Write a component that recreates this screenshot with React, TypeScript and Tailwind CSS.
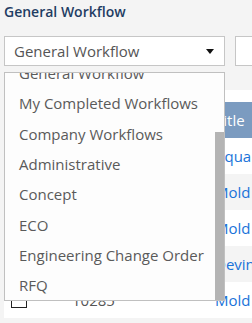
import React from "react";

const items = [
  "General Workflow",
  "My Completed Workflows",
  "Company Workflows",
  "Administrative",
  "Concept",
  "ECO",
  "Engineering Change Order",
  "RFQ",
];

const rows = [
  { id: "10281", title: "Aqua Filter Housing" },
  { id: "10282", title: "Mold Design Review" },
  { id: "10283", title: "Mold Tooling Update" },
  { id: "10284", title: "Devin Bracket" },
  { id: "10285", title: "Mold Release" },
];

export default function App() {
  return (
    <div
      className="w-[252px] h-[323px] overflow-hidden bg-[#f4f4f4] pl-[4px]"
      style={{ fontFamily: '"Open Sans", "Liberation Sans", sans-serif' }}
    >
      <div className="h-[36px] pt-[2px] text-[14px] leading-[20px] font-semibold text-[#1f3d63] whitespace-nowrap">
        General Workflow
      </div>
      <div className="flex gap-[10px] w-[300px]">
        <div className="relative w-[221px] shrink-0">
          <div className="h-[30px] border border-[#c6c6c6] bg-white flex items-center pl-[9px] pr-[10px] text-[15px] text-[#555555]">
            <span className="flex-1 whitespace-nowrap">General Workflow</span>
            <svg width="8" height="5" viewBox="0 0 8 5" className="mt-[1px]">
              <path d="M0 0 H8 L4 5 Z" fill="#111111" />
            </svg>
          </div>
          <div className="absolute left-0 top-full mt-[6px] w-[221px] h-[229px] z-10 border border-[#c0c0c0] bg-[#fdfdfd] overflow-hidden">
            <div className="-mt-[15px]">
              {items.map((it) => (
                <div
                  key={it}
                  className="h-[30.33px] leading-[30.33px] pl-[14px] text-[15px] text-[#5a5a5a] whitespace-nowrap"
                >
                  {it}
                </div>
              ))}
            </div>
            <div className="absolute right-0 top-[59px] bottom-0 w-[9px] bg-[#b4b4b4]" />
          </div>
        </div>
        <div className="h-[30px] flex-1 border border-[#c6c6c6] bg-white" />
      </div>
      <div className="mt-[24px] bg-white pt-[12px] w-[400px]">
        <div className="h-[36px] bg-[#7b9bc0] flex items-center text-[15px] text-white whitespace-nowrap">
          <div className="w-[68px] shrink-0 pl-[7px]" />
          <div className="w-[143px] shrink-0">ID</div>
          <div className="shrink-0">Title</div>
        </div>
        {rows.map((r, i) => (
          <div
            key={r.id}
            className={`h-[36px] flex items-center text-[15px] whitespace-nowrap ${
              i % 2 === 1 ? "bg-[#f4f4f4]" : "bg-white"
            }`}
          >
            <div className="w-[68px] shrink-0 pl-[7px]">
              <div className="w-[16px] h-[16px] border border-[#222222] bg-white" />
            </div>
            <div className="w-[143px] shrink-0 text-[#555555]">{r.id}</div>
            <div className="shrink-0 text-[#1a73d9]">{r.title}</div>
          </div>
        ))}
      </div>
    </div>
  );
}
